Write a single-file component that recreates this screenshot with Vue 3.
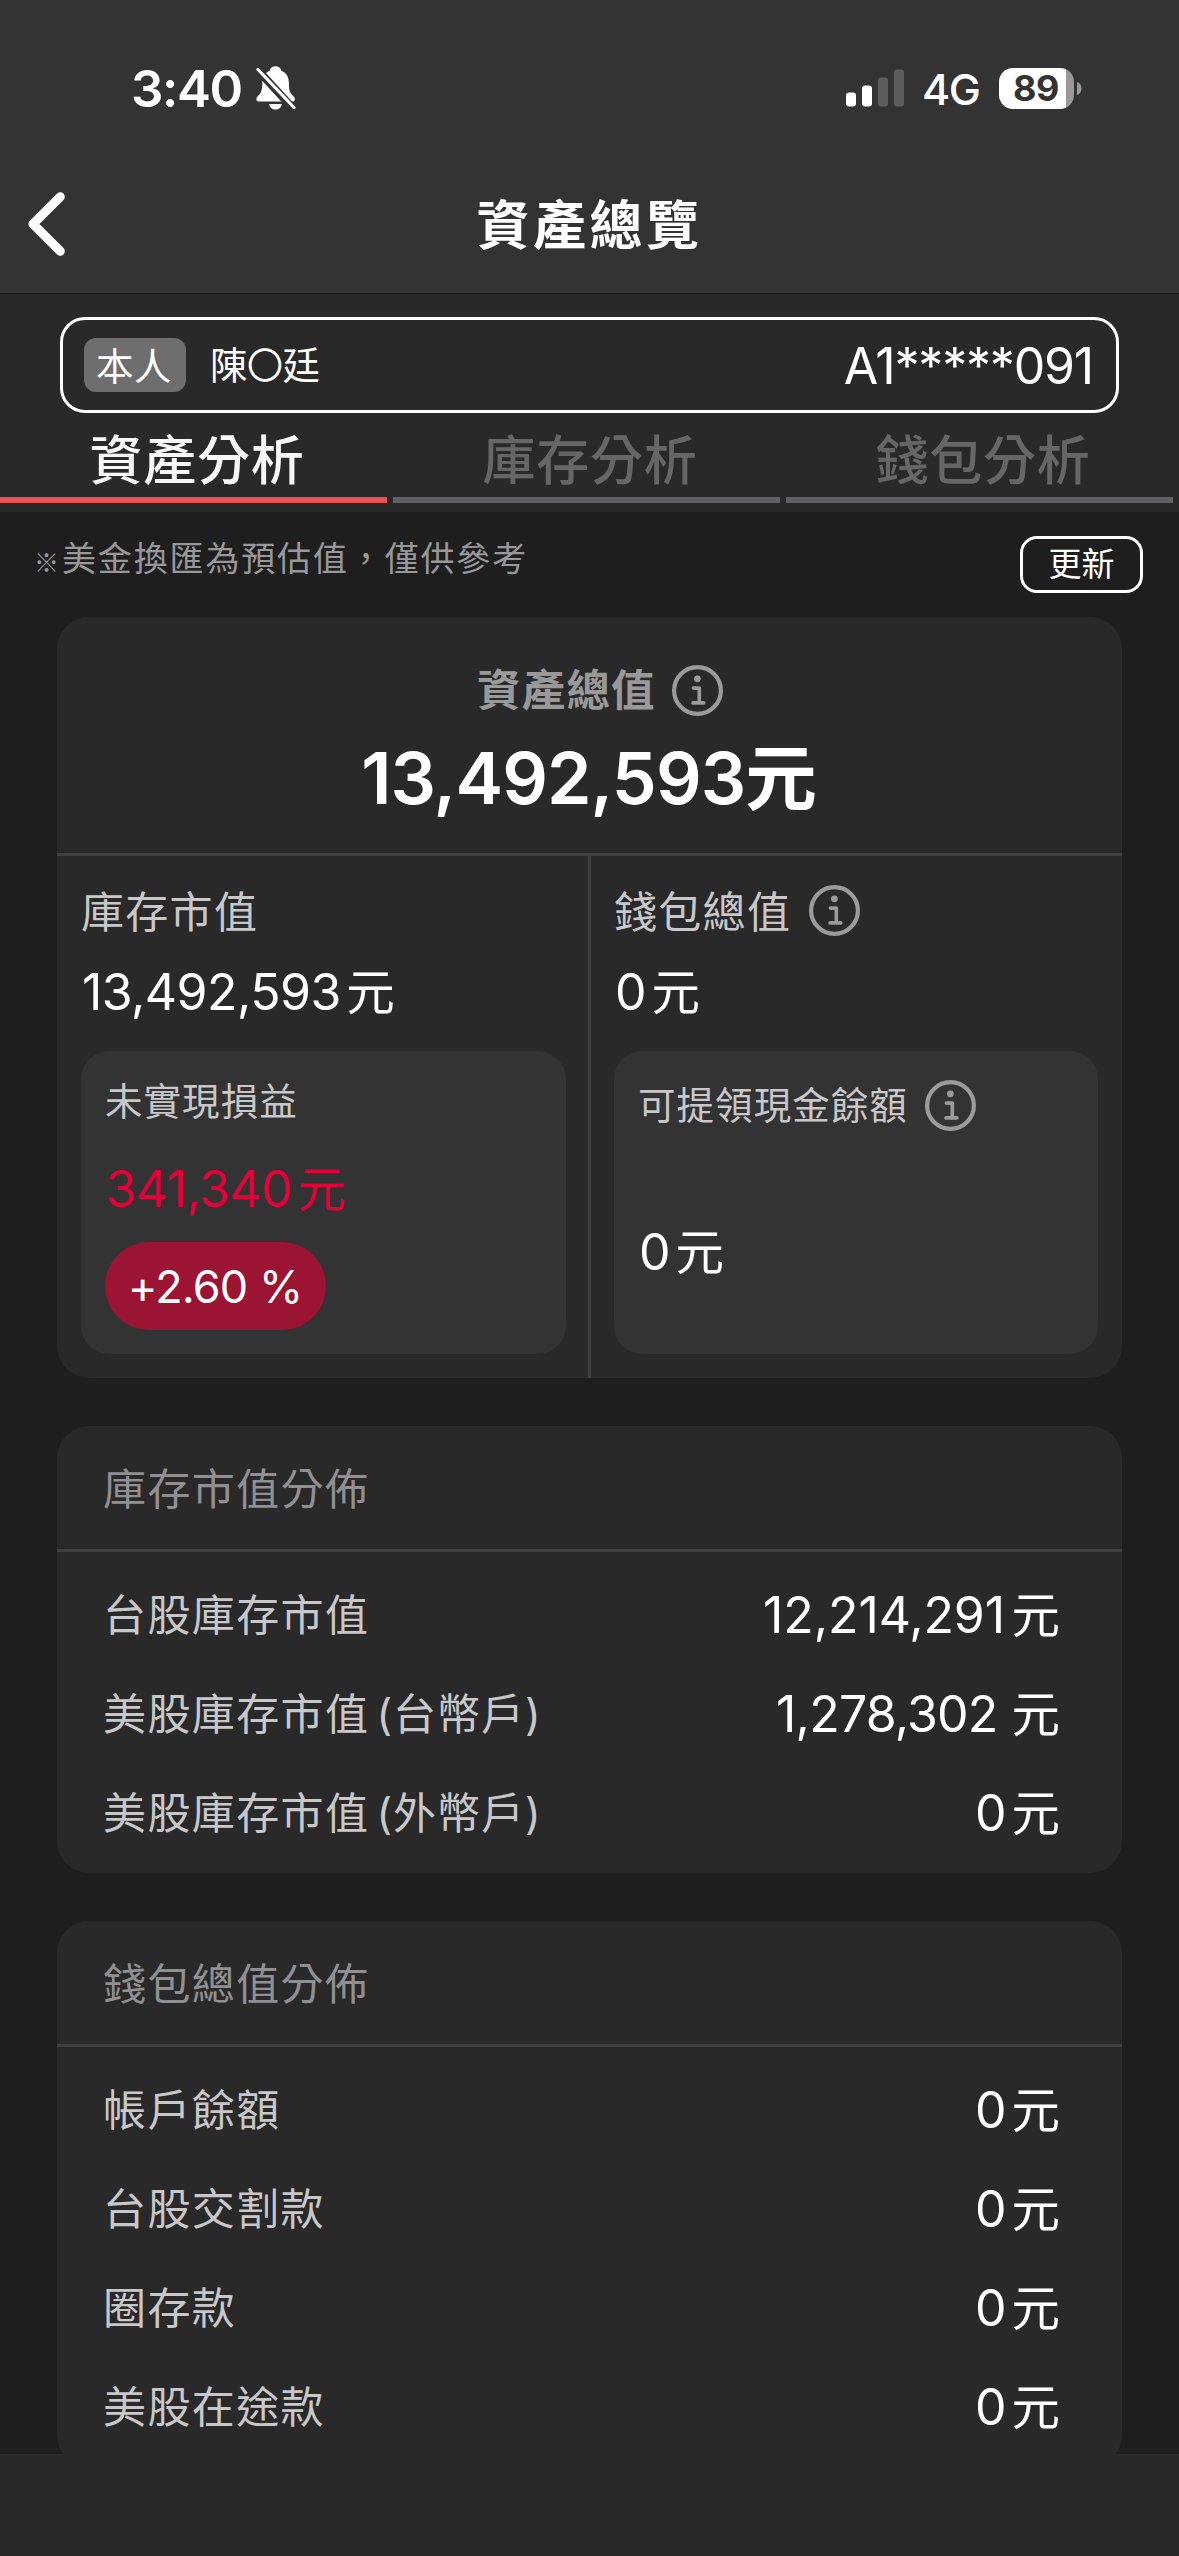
<script setup>
import { h } from 'vue'

const InfoIcon = () =>
  h('svg', { class: 'info-icon', width: 51, height: 51, viewBox: '0 0 51 51', fill: 'none', stroke: '#9b9b9d' }, [
    h('circle', { cx: 25.5, cy: 25.5, r: 23.4, 'stroke-width': 4.2 }),
    h('circle', { cx: 25.4, cy: 13.8, r: 3.4, fill: '#9b9b9d', stroke: 'none' }),
    h('path', { d: 'M21.4 23.1h5.9v14.8M21 37.9h10.8', 'stroke-width': 3.6, 'stroke-linecap': 'round', 'stroke-linejoin': 'round' })
  ])

const tabs = ['資產分析', '庫存分析', '錢包分析']

const sections = [
  {
    title: '庫存市值分佈',
    rows: [
      { label: '台股庫存市值', value: '12,214,291', wide: true },
      { label: '美股庫存市值', note: '(台幣戶)', value: '1,278,302', spaced: true },
      { label: '美股庫存市值', note: '(外幣戶)', value: '0' }
    ]
  },
  {
    title: '錢包總值分佈',
    rows: [
      { label: '帳戶餘額', value: '0' },
      { label: '台股交割款', value: '0' },
      { label: '圈存款', value: '0' },
      { label: '美股在途款', value: '0' }
    ]
  }
]
</script>

<template>
  <div class="screen">
    <header class="header">
      <div class="status">
        <div class="status-left">
          <span class="time">3:40</span>
          <svg class="bell" width="40" height="44" viewBox="0 0 40 44">
            <path fill="#fff" d="M13.5 4.8C14.3 2 16.4.3 19.5.3s5.200 1.700 6 4.500c5 2.200 7.400 6.600 7.400 12.200 0 8.200 1.200 9.900 4.400 13 1.300 1.300 1.900 2.300 1.500 3.700-.3 1.200-1.300 1.900-2.800 1.900H3.300C1.600 35.600.6 34.700.4 33.400c-.2-1.300.4-2.200 1.600-3.400 3.200-3.200 4.200-5 4.300-13 .1-5.600 2.400-10 7.200-12.200z" />
            <path fill="#fff" d="M13.200 38h12.600c-.4 3.300-2.900 5.600-6.300 5.600S13.600 41.300 13.200 38z" />
            <path stroke="#333" stroke-width="8" d="M-.5 1.500L39 44.500" />
            <path stroke="#fff" stroke-width="3.200" stroke-linecap="round" d="M2 3.500L38 41.500" />
          </svg>
        </div>
        <div class="status-right">
          <svg width="58" height="38" viewBox="0 0 58 38">
            <rect x="0" y="23.500" width="10" height="14" rx="3" fill="#fff" />
            <rect x="16" y="16.500" width="10" height="21" rx="3" fill="#fff" />
            <rect x="32" y="8.500" width="10" height="29" rx="3" fill="#5c5c5c" />
            <rect x="48" y=".5" width="10" height="37" rx="3" fill="#5c5c5c" />
          </svg>
          <span class="network">4G</span>
          <div class="battery"><span class="level">89</span></div>
          <svg class="battery-tip" width="5" height="13" viewBox="0 0 5 13"><path d="M0 0C6 2 6 11 0 13z" fill="#999" /></svg>
        </div>
      </div>
      <div class="navbar">
        <svg class="back" width="37" height="64" viewBox="0 0 37 64" fill="none">
          <path d="M32.300 4.800L5 32l27.300 27.200" stroke="#fff" stroke-width="9" stroke-linecap="round" stroke-linejoin="round" />
        </svg>
        <h1 class="title">資產總覽</h1>
        <span class="back-spacer"></span>
      </div>
    </header>

    <div class="top">
      <div class="account">
        <span class="badge">本人</span>
        <span class="name">陳<span class="ring">〇</span>廷</span>
        <span class="number">A1*****091</span>
      </div>
      <nav class="tabs">
        <div v-for="(tab, i) in tabs" :key="tab" class="tab" :class="{ active: i === 0 }">
          <span class="tab-label">{{ tab }}</span>
          <span class="tab-bar"></span>
        </div>
      </nav>
    </div>

    <main class="content">
      <div class="notice">
        <p class="notice-text"><span class="mark">※</span>美金換匯為預估值，僅供參考</p>
        <button class="refresh">更新</button>
      </div>

      <section class="card">
        <div class="total">
          <div class="total-label">資產總值<InfoIcon /></div>
          <div class="total-value"><span class="big">13,492,593</span>元</div>
        </div>
        <div class="split">
          <div class="half left">
            <div class="half-label"><span class="caption">庫存市值</span></div>
            <div class="amount"><span class="num">13,492,593</span><span class="unit">元</span></div>
            <div class="sub">
              <div class="sub-label">未實現損益</div>
              <div class="amount up"><span class="num">341,340</span><span class="unit">元</span></div>
              <div class="pill"><span>+2.60 %</span></div>
            </div>
          </div>
          <div class="half right">
            <div class="half-label"><span class="caption">錢包總值</span><InfoIcon /></div>
            <div class="amount"><span class="num">0</span><span class="unit">元</span></div>
            <div class="sub">
              <div class="sub-label with-icon">可提領現金餘額<InfoIcon /></div>
              <div class="amount cash"><span class="num">0</span><span class="unit">元</span></div>
            </div>
          </div>
        </div>
      </section>

      <section v-for="s in sections" :key="s.title" class="card">
        <h2 class="card-title">{{ s.title }}</h2>
        <div class="rows">
          <div v-for="r in s.rows" :key="r.label + (r.note || '')" class="row">
            <span class="row-label">{{ r.label }}<span v-if="r.note" class="row-note">{{ r.note }}</span></span>
            <span class="amount" :class="{ spaced: r.spaced, wide: r.wide }"><span class="num">{{ r.value }}</span><span class="unit">元</span></span>
          </div>
        </div>
      </section>
    </main>
    <footer class="bottom"></footer>
  </div>
</template>

<style>
html, body { margin: 0; background: #1e1e1e; }
</style>

<style scoped>
.screen {
  width: 1179px;
  height: 2556px;
  display: flex;
  flex-direction: column;
  overflow: hidden;
  background: #1e1e1e;
  color: #fff;
  font-family: Inter, "Noto Sans CJK TC", sans-serif;
  white-space: nowrap;
}
.screen * { box-sizing: border-box; }
.screen :deep(.info-icon) { flex: none; display: block; }

.header { flex: none; height: 294px; background: #333; border-bottom: 1px solid #1c1c1c; }
.status { height: 176px; display: flex; justify-content: space-between; padding: 0 97px 0 131px; }
.status-left { display: flex; align-items: center; gap: 13px; }
.time { font-size: 51px; font-weight: 600; letter-spacing: -1.400px; width: 112px; }
.bell { display: block; }
.status-right { display: flex; align-items: center; }
.network { font-size: 43px; font-weight: 500; line-height: 50px; margin: 1px 0 0 18px; width: 77px; letter-spacing: -1.400px; }
.battery {
  width: 75px; height: 47px; border-radius: 14px;
  background: linear-gradient(90deg, #fff 67px, #999 67px);
  color: #333; display: flex; align-items: center; padding-left: 14px;
}
.battery { height: 41px; }
.level { font-size: 36px; font-weight: 700; line-height: 41px; letter-spacing: -0.5px; }
.battery-tip { margin-left: 3px; }
.navbar { height: 96px; display: flex; align-items: center; justify-content: space-between; padding: 0 28px; }
.back, .back-spacer { width: 37px; flex: none; }
.title { margin: 0; font-size: 53px; font-weight: 600; letter-spacing: 3.500px; line-height: 96px; padding-top: 3px; }

.top { flex: none; height: 218px; background: #292929; padding-top: 23px; }
.account {
  width: 1059px; height: 96px; margin-left: 60px; padding: 0 23px 0 21px;
  border: 3px solid #fff; border-radius: 25px; display: flex; align-items: center;
}
.badge {
  width: 102px; height: 54px; line-height: 58px; border-radius: 12px; background: #6e6e6e;
  text-align: center; font-size: 37.500px; letter-spacing: 0.5px; padding-right: 2px;
}
.name { margin-left: 24px; font-size: 37.500px; line-height: 90px; padding-top: 2px; }
.ring { font-size: 36px; margin: 0 -0.5px; }
.number { margin-left: auto; font-size: 50px; line-height: 92px; letter-spacing: -1.200px; padding-top: 2px; }
.tabs { display: flex; margin-top: 5px; }
.tab { width: 393px; color: #666; display: flex; flex-direction: column; }
.tab-label { height: 79px; line-height: 86px; text-align: center; font-size: 53px; font-weight: 500; letter-spacing: 0.8px; padding-left: 1px; }
.tab-bar { width: 387px; height: 6px; background: #636166; }
.tab.active { color: #f7f7f7; }
.tab.active .tab-bar { background: #eb5353; }

.content { flex: none; height: 1942px; overflow: hidden; }
.notice { height: 105px; padding: 24px 36px 0 34px; display: flex; justify-content: space-between; align-items: flex-start; }
.notice-text { margin: 0; line-height: 45px; font-size: 34px; letter-spacing: 1.850px; color: #98989a; display: flex; }
.mark { width: 28px; font-size: 25px; font-weight: 700; line-height: 50px; letter-spacing: 0; font-family: "Noto Sans CJK TC", sans-serif; }
.refresh {
  width: 123px; height: 57px; padding: 0; border: 3px solid #fff; border-radius: 17px; background: none;
  color: #fff; font: 400 33px/51px Inter, "Noto Sans CJK TC", sans-serif;
}

.card { width: 1065px; margin: 0 auto 48px; background: #292929; border-radius: 32px; overflow: hidden; }
.total { height: 239px; border-bottom: 3px solid #404042; padding-top: 48px; }
.total-label {
  height: 51px; line-height: 51px; display: flex; align-items: center; gap: 16px; padding-left: 420px;
  font-size: 43.500px; font-weight: 700; letter-spacing: 1.200px; color: #999;
}
.total-value { text-align: center; height: 124px; line-height: 124px; font-size: 71.500px; font-weight: 600; padding-right: 1px; }
.big { letter-spacing: -0.9px; }
.split { display: flex; height: 522px; }
.half { padding: 29px 24px 24px; flex: 1; }
.half.left { width: 534px; flex: none; border-right: 3px solid #404042; padding-right: 22px; }
.half.right { padding-left: 23px; }
.half-label { height: 51px; line-height: 51px; display: flex; align-items: center; gap: 18px; font-size: 43px; letter-spacing: 1.300px; color: #c8c8ca; }
.caption { padding-top: 3px; }
.amount { display: flex; align-items: center; height: 60px; font-size: 50px; line-height: 60px; }
.half > .amount { margin-top: 26px; padding-left: 1px; }
.num { letter-spacing: -0.55px; }
.unit { font-size: 48.500px; margin-left: 5.500px; padding-top: 2px; }
.sub { height: 303px; margin-top: 29px; background: #333; border-radius: 28px; padding: 25px 24px 24px; }
.sub-label { height: 51px; line-height: 51px; display: flex; align-items: center; font-size: 37.500px; letter-spacing: 1.050px; color: #c8c8ca; gap: 17px; }
.sub-label.with-icon { margin-top: 4px; }
.up { margin-top: 32px; color: #e60039; padding-left: 1px; }
.pill {
  width: 221px; height: 88px; margin-top: 23px; border-radius: 44px; background: #9c1433;
  display: flex; align-items: center; justify-content: center; font-size: 45px; letter-spacing: -0.9px; padding-right: 1px;
}
.cash { margin-top: 91px; padding-left: 1px; }

.card-title {
  margin: 0; height: 126px; line-height: 126px; border-bottom: 3px solid #404042; padding-left: 46px;
  font-size: 43px; font-weight: 400; letter-spacing: 1.400px; color: #909092;
}
.rows { padding: 13px 62px 11px 46px; }
.row { height: 99px; display: flex; align-items: center; justify-content: space-between; }
.row-label { font-size: 43px; line-height: 60px; letter-spacing: 1.400px; color: #c8c8ca; }
.row-note { margin-left: 7px; letter-spacing: 1px; }
.wide .num { letter-spacing: -0.1px; }
.wide .unit { margin-left: 6.500px; }
.spaced .num { letter-spacing: -0.8px; }
.spaced .unit { margin-left: 14px; }

.bottom { flex: none; height: 102px; background: #292929; }
</style>
